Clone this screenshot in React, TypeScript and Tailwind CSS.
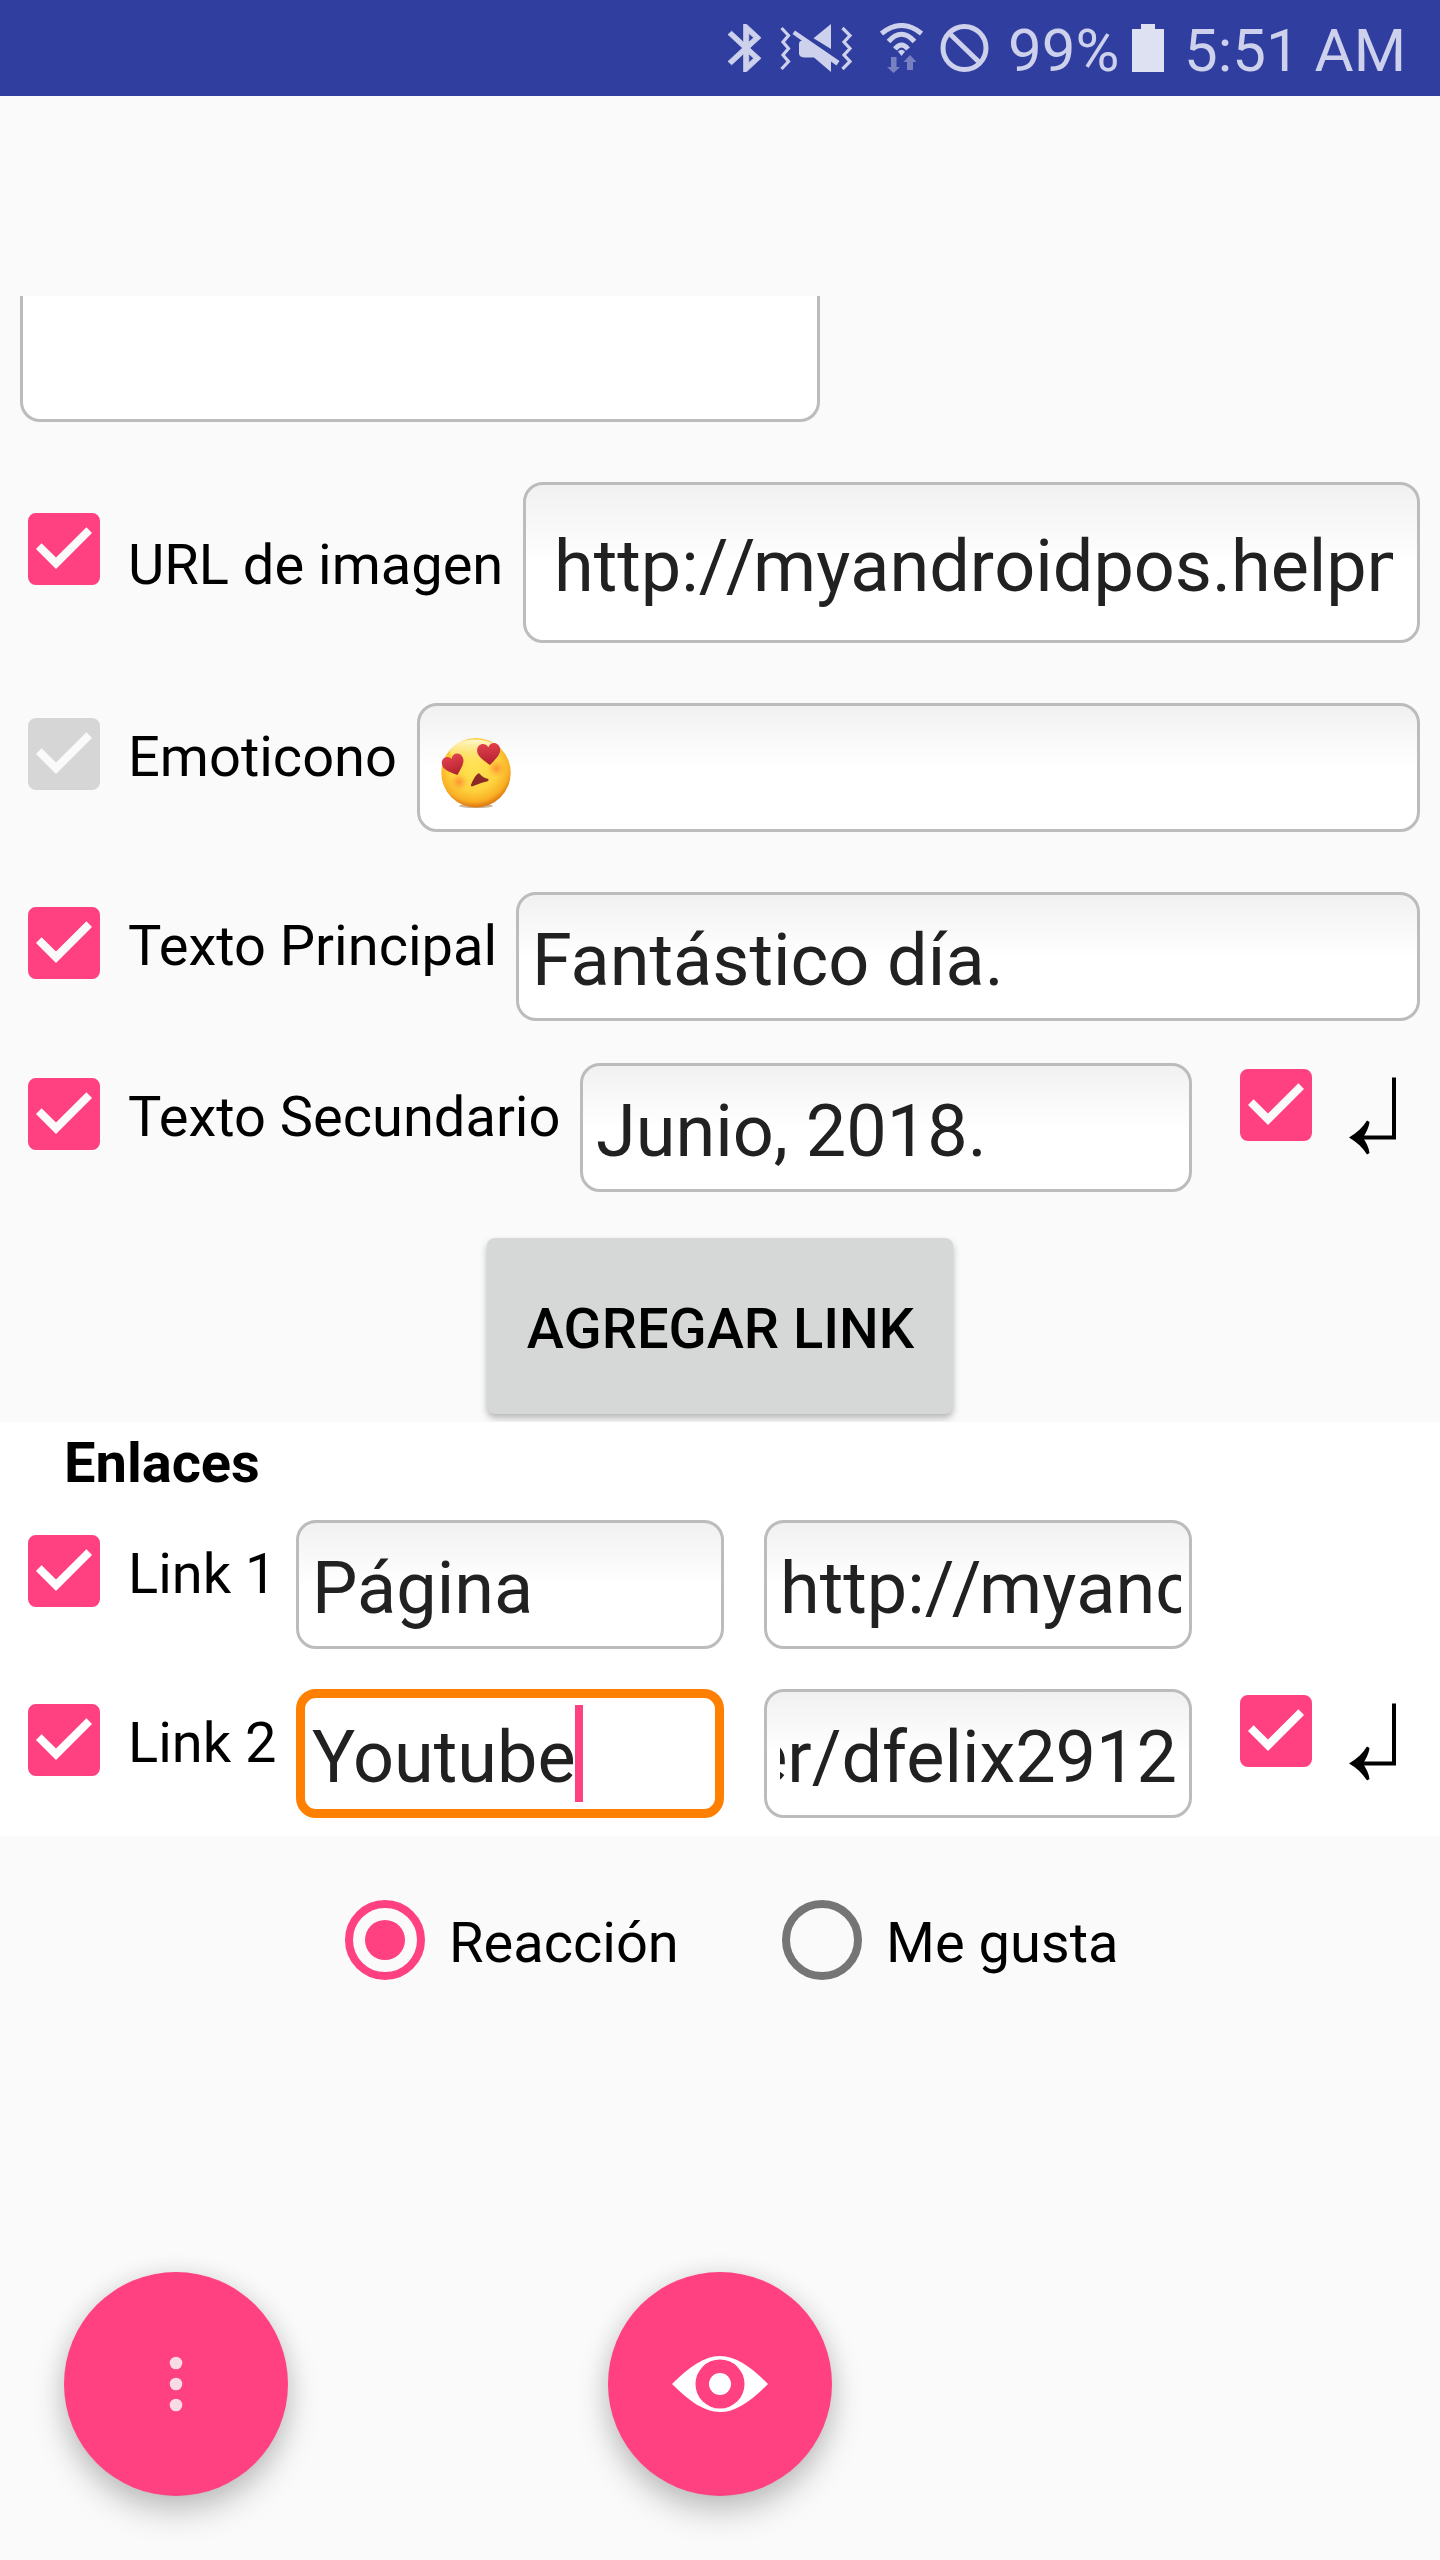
import type { ReactNode } from 'react'
import clsx from 'clsx'

function CheckBox({ disabled, className }: { disabled?: boolean; className?: string }) {
  return (
    <svg
      viewBox="0 0 72 72"
      className={clsx('size-[72px] shrink-0', disabled ? 'text-[#d6d6d6]' : 'text-[#ff4081]', className)}
    >
      {/* the tick is a hole, so the row background shows through */}
      <path
        fill="currentColor"
        fillRule="evenodd"
        d="M8 0h56a8 8 0 0 1 8 8v56a8 8 0 0 1-8 8H8a8 8 0 0 1-8-8V8a8 8 0 0 1 8-8zM28 56L64 20l-5.6-5.8L28 44.600 13.600 30.300 8 36z"
      />
    </svg>
  )
}

function Label({ children, className }: { children: ReactNode; className?: string }) {
  return (
    <span className={clsx('shrink-0 whitespace-nowrap text-[56px] leading-[72px] text-black', className)}>
      {children}
    </span>
  )
}

function Field({ children, className }: { children?: ReactNode; className?: string }) {
  return (
    <div
      className={clsx(
        'h-[129px] shrink-0 rounded-[20px] border-[3px] border-[#bcbcbc] bg-linear-to-b from-[#f1f1f1] to-white to-50% pt-6 pr-[8px] pl-[13px]',
        className,
      )}
    >
      <FieldText>{children}</FieldText>
    </div>
  )
}

function FieldText({ children }: { children?: ReactNode }) {
  return (
    <div className="overflow-hidden whitespace-nowrap text-[72px] leading-[84px] text-[#212121]">{children}</div>
  )
}

function Url({ rest }: { rest: string }) {
  return (
    <span className="[font-kerning:none]">
      http:<span className="tracking-[-2.5px]">{'//'}</span>
      {rest}
    </span>
  )
}

function ReturnArrow() {
  return (
    <svg viewBox="0 0 47 78" className="mt-[14px] ml-[37px] h-[78px] w-[47px] shrink-0">
      <path d="M45 0.500V60.500H12" fill="none" stroke="#000" strokeWidth="4" />
      <path d="M0 60.500C8 56 14 50 18 43.500l2.500 1.500C20 50 17 56 14 60.500c3 5 6 10 6.500 15.500l-2.500 1.500C14 71 8 65 0 60.500z" />
    </svg>
  )
}

function Emoji() {
  return (
    <svg viewBox="0 0 70 72" className="mt-[8px] ml-[8px] h-[72px] w-[70px]">
      <defs>
        <radialGradient id="face" cx="0.47" cy="0.4" r="0.6">
          <stop offset="0" stopColor="#ffe356" />
          <stop offset="0.6" stopColor="#fdd23e" />
          <stop offset="0.86" stopColor="#f9ae23" />
          <stop offset="1" stopColor="#dc7410" />
        </radialGradient>
        <linearGradient id="shine" x1="0" y1="0" x2="0" y2="1">
          <stop offset="0" stopColor="#fff8cf" />
          <stop offset="1" stopColor="#ffec8a" stopOpacity="0" />
        </linearGradient>
        <radialGradient id="blush">
          <stop offset="0" stopColor="#ff7b2e" stopOpacity="0.75" />
          <stop offset="1" stopColor="#ff9a30" stopOpacity="0" />
        </radialGradient>
        <linearGradient id="heart" x1="0" y1="0" x2="0" y2="1">
          <stop offset="0" stopColor="#e2404c" />
          <stop offset="1" stopColor="#b0202f" />
        </linearGradient>
      </defs>
      <ellipse cx="35" cy="68" rx="17" ry="2" fill="#8a5a20" opacity="0.45" />
      <circle cx="35" cy="34.700" r="34.700" fill="url(#face)" />
      <ellipse cx="34" cy="14" rx="25" ry="12.500" fill="url(#shine)" />
      <circle cx="18" cy="44" r="9" fill="url(#blush)" />
      <circle cx="55.500" cy="30.500" r="9" fill="url(#blush)" />
      <g fill="url(#heart)">
        <path d="M0 10C-6 5-11 1-11-4c0-7 8-9 11-3 3-6 11-4 11 3 0 5-5 9-11 14z" transform="translate(13 27.500) rotate(-20)" />
        <path d="M0 10C-6 5-11 1-11-4c0-7 8-9 11-3 3-6 11-4 11 3 0 5-5 9-11 14z" transform="translate(48 16.500) rotate(-5) scale(1.05)" />
      </g>
      <path d="M38.500 35.500Q42 40 47.500 41q0.500 1.500-1 2.200Q38 45 31 48.500q-1.500 0-1-1.800Q33 39 37 35.500z" fill="#8c2a26" />
    </svg>
  )
}

function StatusBar() {
  return (
    <div className="flex h-24 shrink-0 items-start bg-[#303f9f] pl-[728px] text-[#cdd1ec]">
      <svg viewBox="5 2 12.71 20" preserveAspectRatio="none" className="mt-6 h-12 w-[33px] shrink-0">
        <path
          fill="currentColor"
          stroke="currentColor"
          strokeWidth="0.300"
          d="M17.710 7.710L12 2h-1v7.590L6.410 5 5 6.410 10.590 12 5 17.590 6.410 19 11 14.410V22h1l5.710-5.710-4.300-4.290 4.300-4.290zM13 5.830l1.880 1.880L13 9.590V5.830zm1.880 10.460L13 18.170v-3.760l1.880 1.880z"
        />
      </svg>
      <svg viewBox="0 0 73 48" className="mt-6 ml-[19px] h-12 w-[73px] shrink-0">
        <g fill="none" stroke="currentColor" strokeWidth="3.200">
          <path d="M1.500 4l7 7.500-5.500 6.500 5.500 6.500-5.500 6.500 5.500 6.500-7 7.500" />
          <path d="M62.500 4l7.500 7.500-6 6.500 6 6.500-6 6.500 6 6.500-7.500 7.500" />
        </g>
        <g fill="currentColor">
          <path d="M51 0v25L33.500 14.300zM22 16.500h5L51 37v11L34 33.500H24q-5-0.500-5-4V20q0-3 3-3.500z" />
          <path d="M15 6.500L59.500 37l-3 4.500L12.500 10z" />
        </g>
      </svg>
      <svg viewBox="0 0 43 50" className="mt-[23px] ml-[27px] h-[50px] w-[43px] shrink-0">
        <g fill="none" stroke="currentColor" strokeWidth="5">
          <path d="M1.500 10.500Q21.500-5.500 41.500 10.500" />
          <path d="M8.500 18.500Q21.500 4 34.500 18.500" />
          <path d="M15 26Q21.500 18 28 26" />
        </g>
        <path d="M21.500 33l-3.500-4.500q3.500-3.500 7 0z" fill="currentColor" />
        <g fill="currentColor" opacity="0.450">
          <path d="M11 34h5.500v10H20l-6.500 6L7 44h4z" />
          <path d="M27 47V39h-3.500l6.500-7 6.500 7H33v8z" />
        </g>
      </svg>
      <svg viewBox="0 0 49 48" className="mt-6 ml-[17px] h-12 w-[49px] shrink-0">
        <g fill="none" stroke="currentColor" strokeWidth="5">
          <circle cx="24.500" cy="24" r="21.500" />
          <path d="M9 9l31 30" />
        </g>
      </svg>
      <span className="mt-[15px] ml-[19px] w-[124px] shrink-0 text-[60px] leading-[71px]">99%</span>
      <svg viewBox="0 0 32 48" className="mt-6 h-12 w-8 shrink-0 text-[#dee1f1]">
        <path d="M9 0h14v5h9v43H0V5h9z" fill="currentColor" />
      </svg>
      <span className="mt-[15px] ml-5 shrink-0 whitespace-nowrap text-[60px] leading-[71px]">5:51 AM</span>
    </div>
  )
}

function Radio({ checked, children }: { checked?: boolean; children: ReactNode }) {
  return (
    <div className="flex items-start">
      <div
        className={clsx(
          'flex size-20 shrink-0 items-center justify-center rounded-full border-8',
          checked ? 'border-[#ff4081]' : 'border-[#757575]',
        )}
      >
        {checked && <div className="size-10 rounded-full bg-[#ff4081]" />}
      </div>
      <Label className="mt-[7px] ml-6">{children}</Label>
    </div>
  )
}

function Fab({ children }: { children: ReactNode }) {
  return (
    <button className="flex size-56 items-center justify-center rounded-full bg-[#ff4081] shadow-[0_16px_32px_rgba(0,0,0,0.22),0_0_24px_rgba(0,0,0,0.08)]">
      {children}
    </button>
  )
}

export default function App() {
  return (
    <div className="flex h-[2560px] w-[1440px] flex-col overflow-hidden bg-[#fafafa] font-[Roboto,sans-serif]">
      <StatusBar />

      {/* Bottom of the scrolled text area */}
      <div className="mt-[200px] ml-5 h-[126px] w-[800px] shrink-0 rounded-b-[20px] border-[3px] border-t-0 border-[#bcbcbc] bg-white" />

      {/* URL de imagen */}
      <div className="mt-[60px] flex shrink-0 items-start pl-7">
        <CheckBox className="mt-[31px]" />
        <Label className="mt-[47px] ml-7 w-[395px]">URL de imagen</Label>
        <div className="h-[161px] w-[897px] shrink-0 rounded-[20px] border-[3px] border-[#bcbcbc] bg-linear-to-b from-[#f1f1f1] to-white to-50% pt-10 pr-6 pl-[28px]">
          <FieldText>
            <Url rest="myandroidpos.helpm" />
          </FieldText>
        </div>
      </div>

      {/* Emoticono */}
      <div className="mt-[60px] flex shrink-0 items-start pl-7">
        <CheckBox disabled className="mt-[15px]" />
        <Label className="mt-[18px] ml-7 w-[289px]">Emoticono</Label>
        <Field className="w-[1003px]">
          <Emoji />
        </Field>
      </div>

      {/* Texto Principal */}
      <div className="mt-[60px] flex shrink-0 items-start pl-7">
        <CheckBox className="mt-[15px]" />
        <Label className="mt-[18px] ml-7 w-[388px]">Texto Principal</Label>
        <Field className="w-[904px]">Fantástico día.</Field>
      </div>

      {/* Texto Secundario */}
      <div className="mt-[42px] flex shrink-0 items-start pl-7">
        <CheckBox className="mt-[15px]" />
        <Label className="mt-[18px] ml-7 w-[452px]">Texto Secundario</Label>
        <Field className="w-[612px]">Junio, 2018.</Field>
        <CheckBox className="mt-[6px] ml-12" />
        <ReturnArrow />
      </div>

      <button className="mt-[46px] h-[176px] w-[466px] shrink-0 self-center rounded-lg bg-[#d6d7d7] pt-[5px] pl-px text-[56px] leading-[72px] font-medium text-black shadow-[0_4px_7px_rgba(0,0,0,0.28)]">
        AGREGAR LINK
      </button>

      {/* Enlaces */}
      <div className="relative mt-[8px] flex h-[414px] shrink-0 flex-col bg-white">
        <Label className="mt-[5px] ml-16 font-bold">Enlaces</Label>
        <div className="mt-[21px] flex items-start pl-7">
          <CheckBox className="mt-[15px]" />
          <Label className="mt-[18px] ml-7 w-[168px]">Link 1</Label>
          <Field className="w-[428px]">Página</Field>
          <Field className="ml-10 w-[428px]">
            <Url rest="myanc" />
          </Field>
        </div>
        <div className="mt-10 flex items-start pl-7">
          <CheckBox className="mt-[15px]" />
          <Label className="mt-[18px] ml-7 w-[168px]">Link 2</Label>
          <div className="flex h-[129px] w-[428px] shrink-0 rounded-[20px] border-[9px] border-[#ff8000] bg-white pl-[7px]">
            <div className="mt-[18px]">
              <FieldText>Youtube</FieldText>
            </div>
            <div className="-ml-px mt-[7px] h-[97px] w-2 bg-[#ff4081]" />
          </div>
          <Field className="ml-10 w-[428px]">
            <div className="flex justify-end pr-[4px]">er/dfelix2912</div>
          </Field>
          <CheckBox className="mt-[6px] ml-12" />
          <ReturnArrow />
        </div>
      </div>

      <div className="mt-16 flex shrink-0 pl-[345px]">
        <div className="w-[437px]">
          <Radio checked>Reacción</Radio>
        </div>
        <Radio>Me gusta</Radio>
      </div>

      <div className="mt-[292px] flex shrink-0 gap-80 pl-16">
        <Fab>
          <svg viewBox="0 0 14 56" className="h-14 w-[14px]">
            <g fill="#f8dbe6">
              <circle cx="7" cy="7" r="6.300" />
              <circle cx="7" cy="28" r="6.300" />
              <circle cx="7" cy="49" r="6.300" />
            </g>
          </svg>
        </Fab>
        <Fab>
          <svg viewBox="0 0 96 56" className="h-14 w-24">
            <path d="M0 28C17 11 32 0 48 0s31 11 48 28C79 45 64 56 48 56S17 45 0 28z" fill="#fff" />
            <circle cx="48" cy="28" r="24.500" fill="#ff4081" />
            <circle cx="48" cy="28" r="11" fill="#fff" />
          </svg>
        </Fab>
      </div>
    </div>
  )
}
